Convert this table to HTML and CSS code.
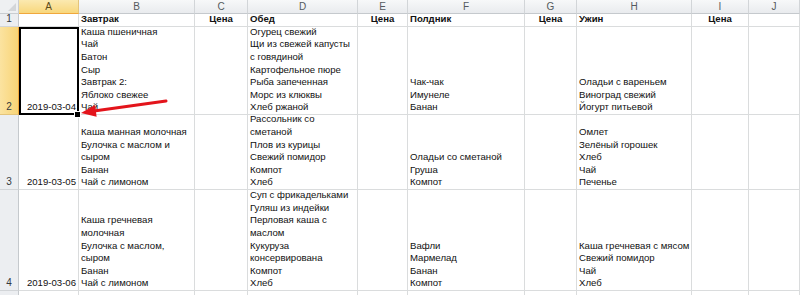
FILE: index.html
```html
<!DOCTYPE html>
<html lang="ru">
<head>
<meta charset="utf-8">
<title>Меню</title>
<link rel="stylesheet" href="styles.css">
</head>
<body>
<div class="wrap">
  <div class="sheet">
    <!-- column headers -->
    <div class="corner"><span class="tri"></span></div>
    <div class="ch sel">A</div>
    <div class="ch">B</div>
    <div class="ch">C</div>
    <div class="ch">D</div>
    <div class="ch">E</div>
    <div class="ch">F</div>
    <div class="ch">G</div>
    <div class="ch">H</div>
    <div class="ch">I</div>
    <div class="ch">J</div>

    <!-- row 1 -->
    <div class="rh">1</div>
    <div class="c"></div>
    <div class="c b">Завтрак</div>
    <div class="c b ctr">Цена</div>
    <div class="c b">Обед</div>
    <div class="c b ctr">Цена</div>
    <div class="c b">Полдник</div>
    <div class="c b ctr">Цена</div>
    <div class="c b">Ужин</div>
    <div class="c b ctr">Цена</div>
    <div class="c"></div>

    <!-- row 2 -->
    <div class="rh sel">2</div>
    <div class="c r active">2019-03-04<span class="handle"></span></div>
    <div class="c">Каша пшеничная<br>Чай<br>Батон<br>Сыр<br>Завтрак 2:<br>Яблоко свежее<br>Чай</div>
    <div class="c"></div>
    <div class="c">Огурец свежий<br>Щи из свежей капусты<br>с говядиной<br>Картофельное пюре<br>Рыба запеченная<br>Морс из клюквы<br>Хлеб ржаной</div>
    <div class="c"></div>
    <div class="c">Чак-чак<br>Имунеле<br>Банан</div>
    <div class="c"></div>
    <div class="c">Оладьи с вареньем<br>Виноград свежий<br>Йогурт питьевой</div>
    <div class="c"></div>
    <div class="c"></div>

    <!-- row 3 -->
    <div class="rh">3</div>
    <div class="c r">2019-03-05</div>
    <div class="c">Каша манная молочная<br>Булочка с маслом и<br>сыром<br>Банан<br>Чай с лимоном</div>
    <div class="c"></div>
    <div class="c">Рассольник со<br>сметаной<br>Плов из курицы<br>Свежий помидор<br>Компот<br>Хлеб</div>
    <div class="c"></div>
    <div class="c">Оладьи со сметаной<br>Груша<br>Компот</div>
    <div class="c"></div>
    <div class="c">Омлет<br>Зелёный горошек<br>Хлеб<br>Чай<br>Печенье</div>
    <div class="c"></div>
    <div class="c"></div>

    <!-- row 4 -->
    <div class="rh">4</div>
    <div class="c r">2019-03-06</div>
    <div class="c">Каша гречневая<br>молочная<br>Булочка с маслом,<br>сыром<br>Банан<br>Чай с лимоном</div>
    <div class="c"></div>
    <div class="c">Суп с фрикадельками<br>Гуляш из индейки<br>Перловая каша с<br>маслом<br>Кукуруза<br>консервирована<br>Компот<br>Хлеб</div>
    <div class="c"></div>
    <div class="c">Вафли<br>Мармелад<br>Банан<br>Компот</div>
    <div class="c"></div>
    <div class="c">Каша гречневая с мясом<br>Свежий помидор<br>Чай<br>Хлеб</div>
    <div class="c"></div>
    <div class="c"></div>

    <!-- row 5 (partial, number hidden below the fold) -->
    <div class="rh"></div>
    <div class="c"></div>
    <div class="c"></div>
    <div class="c"></div>
    <div class="c"></div>
    <div class="c"></div>
    <div class="c"></div>
    <div class="c"></div>
    <div class="c"></div>
    <div class="c"></div>
    <div class="c"></div>
  </div>

  <svg class="arrow" width="800" height="295" viewBox="0 0 800 295" aria-hidden="true">
    <line x1="166" y1="101" x2="94" y2="111" stroke="#e3141b" stroke-width="3" stroke-linecap="round"/>
    <polygon points="81,113 96.6,116.8 95.1,104.9" fill="#e3141b"/>
  </svg>
</div>
</body>
</html>
```
FILE: styles.css
```css
html, body {
  margin: 0;
  padding: 0;
  background: #ffffff;
  overflow: hidden;
}

.wrap {
  position: relative;
  width: 800px;
  height: 295px;
  overflow: hidden;
}

.sheet {
  display: grid;
  grid-template-columns: 19px 60px 116px 53px 110px 50px 117px 52px 115px 57px 51px;
  grid-template-rows: 14px 13px 88px 75px 101px 30px;
  font-family: "Liberation Sans", Arial, sans-serif;
  font-size: 9.6px;
  color: #111;
}

.sheet > div {
  box-sizing: border-box;
  min-width: 0;
}

.corner {
  position: relative;
  background: #eef0f2;
  border-right: 1px solid #c9cdd1;
  border-bottom: 1px solid #c9cdd1;
}

.tri {
  position: absolute;
  right: 2px;
  bottom: 2px;
  width: 0;
  height: 0;
  border-left: 8px solid transparent;
  border-bottom: 8px solid #d3d6d9;
}

.ch {
  background: linear-gradient(#f7f8f9, #e9ebee);
  border-right: 1px solid #d2d5d8;
  border-bottom: 1px solid #c5c9cd;
  color: #555a60;
  text-align: center;
  line-height: 14px;
  font-size: 10px;
}

.ch.sel {
  background: linear-gradient(#fbe9b0, #f8d77c);
  border-bottom: 1px solid #f0a73c;
  border-right: 1px solid #e4c47a;
  color: #5a4a1a;
}

.rh {
  background: #eceef1;
  border-right: 1px solid #c5c9cd;
  border-bottom: 1px solid #d2d5d8;
  color: #333a40;
  display: flex;
  flex-direction: column;
  justify-content: flex-end;
  align-items: center;
  line-height: 12.6px;
  font-size: 10px;
}

.rh.sel {
  background: linear-gradient(90deg, #fbe3a0, #f8d476);
  border-right: 1px solid #f0a73c;
  border-bottom: 1px solid #e4c47a;
}

.c {
  position: relative;
  border-right: 1px solid #dadcdd;
  border-bottom: 1px solid #dadcdd;
  padding: 0 2px 0 2px;
  display: flex;
  flex-direction: column;
  justify-content: flex-end;
  white-space: nowrap;
  line-height: 12.6px;
  overflow: visible;
}

.c.b {
  font-weight: bold;
}

.c.ctr {
  align-items: center;
  text-align: center;
}

.c.r {
  align-items: flex-end;
  text-align: right;
  padding-right: 2px;
}

.active {
  outline: 2px solid #000;
  outline-offset: -2px;
  z-index: 2;
}

.handle {
  position: absolute;
  right: -3px;
  bottom: -4px;
  width: 5px;
  height: 5px;
  background: #000;
  border: 1px solid #fff;
  box-sizing: content-box;
}

.arrow {
  position: absolute;
  left: 0;
  top: 0;
  pointer-events: none;
  z-index: 5;
}
```
